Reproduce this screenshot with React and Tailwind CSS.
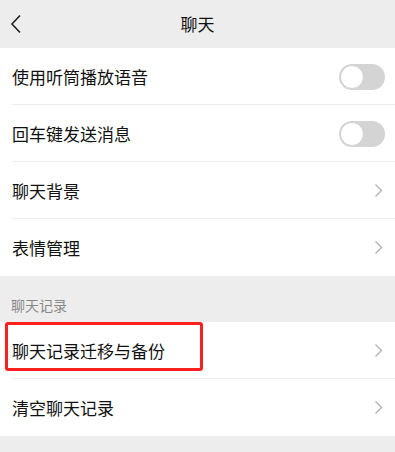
import React from "react";

const font = { fontFamily: '"Noto Sans CJK SC", "Noto Sans", sans-serif' };

const Chevron = () => (
  <svg width="9" height="15" viewBox="0 0 9 15" className="shrink-0">
    <path d="M1.5 1.5 L7.5 7.5 L1.5 13.5" fill="none" stroke="#b2b2b2" strokeWidth="1.4" />
  </svg>
);

const Toggle = () => (
  <div className="relative w-[46px] h-[26px] rounded-full bg-[#d4d4d4] shrink-0 mr-[-2px]">
    <div className="absolute left-[1px] top-[1px] w-[24px] h-[24px] rounded-full bg-white border border-[#d0d0d0]" />
  </div>
);

const Row = ({ label, right, last, highlight }) => (
  <div className="relative h-[57px] flex items-center justify-between pl-3 pr-[12px]">
    {highlight && (
      <div className="absolute left-[5px] top-0 w-[198px] h-[49px] border-[3px] border-[#ff1f1f] rounded-[3px]" />
    )}
    <span className="text-[17px] text-[#111]">{label}</span>
    {right}
    {!last && <div className="absolute left-3 right-0 bottom-0 h-px bg-[#ececec]" />}
  </div>
);

export default function App() {
  return (
    <div className="w-[395px] h-[452px] bg-[#ededed] overflow-hidden" style={font}>
      {/* Top bar */}
      <div className="relative h-[48px] flex items-center justify-center">
        <svg width="12" height="20" viewBox="0 0 12 20" className="absolute left-[10px] top-[14px]">
          <path d="M10 1.5 L2 10 L10 18.5" fill="none" stroke="#222" strokeWidth="1.6" />
        </svg>
        <span className="text-[17px] text-[#111]">聊天</span>
      </div>

      <div className="bg-white">
        <Row label="使用听筒播放语音" right={<Toggle />} />
        <Row label="回车键发送消息" right={<Toggle />} />
        <Row label="聊天背景" right={<Chevron />} />
        <Row label="表情管理" right={<Chevron />} last />
      </div>

      <div className="h-[46px] flex items-end pl-[11px] pb-[6px]">
        <span className="text-[14px] text-[#888]">聊天记录</span>
      </div>

      <div className="bg-white">
        <Row label="聊天记录迁移与备份" right={<Chevron />} highlight />
        <Row label="清空聊天记录" right={<Chevron />} last />
      </div>
    </div>
  );
}
